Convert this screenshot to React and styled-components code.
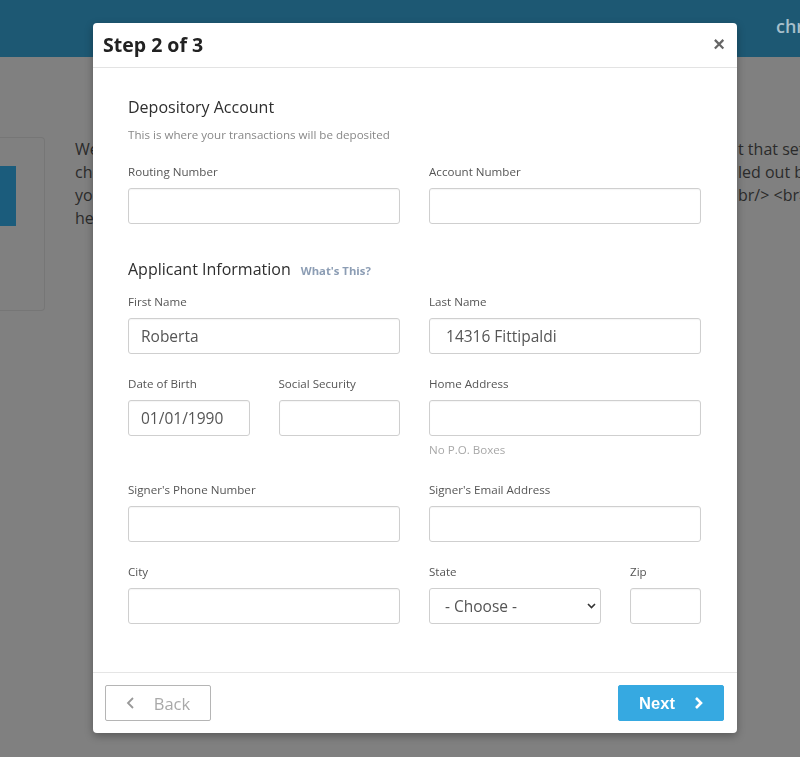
import React from 'react';
import styled, { createGlobalStyle } from 'styled-components';

const GlobalStyle = createGlobalStyle`
    html, body {
        margin: 0;
        padding: 0;
        height: 100%;
        overflow: hidden;
    }
    body {
        font-family: "Open Sans", "Liberation Sans", sans-serif;
        background: #808080;
    }
`;

const Page = styled.div`
    width: 100%;
    height: 757px;
    background: #808080;
    overflow: hidden;
`;

const TopBar = styled.div`
    height: 57px;
    background: #1d5873;
    display: flex;
    align-items: center;
    padding: 0 0 6px 776px;
    box-sizing: border-box;
    overflow: hidden;
`;

const Brand = styled.span`
    color: #a7bfcb;
    font-size: 18px;
    font-weight: 600;
    white-space: nowrap;
`;

const Content = styled.div`
    display: flex;
    align-items: flex-start;
    gap: 30px;
    padding-top: 80px;
`;

const SideCard = styled.div`
    flex-shrink: 0;
    width: 45px;
    height: 174px;
    border: 1px solid #767676;
    border-left: none;
    border-radius: 0 4px 4px 0;
    padding-top: 28px;
    box-sizing: border-box;
`;

const SideButton = styled.div`
    width: 16px;
    height: 60px;
    background: #1b5c7c;
`;

const Text = styled.div`
    padding-top: 1px;
    color: #2b2b2b;
    font-size: 16px;
    line-height: 23px;
`;

const Line = styled.div`
    display: grid;
    grid-template-columns: 663px auto;
    white-space: nowrap;
`;

const Backdrop = styled.div`
    position: fixed;
    inset: 0;
    padding: 23px 0 0 93px;
`;

const Modal = styled.div`
    width: 644px;
    background: #fff;
    border-radius: 4px;
    box-shadow: 0 3px 9px rgba(0, 0, 0, 0.3);
    overflow: hidden;
`;

const ModalHeader = styled.div`
    height: 45px;
    display: flex;
    align-items: center;
    justify-content: space-between;
    padding: 0 10px 2px;
    box-sizing: border-box;
    border-bottom: 1px solid #e3e3e3;
`;

const Title = styled.h2`
    margin: 0;
    font-size: 19.5px;
    font-weight: 700;
    color: #222;
`;

const Close = styled.button`
    border: none;
    background: none;
    padding: 0;
    margin-right: 2px;
    font-family: "Liberation Sans", Arial, sans-serif;
    font-size: 20px;
    font-weight: 700;
    color: #666;
    line-height: 1;
`;

const ModalBody = styled.div`
    padding: 28px 36px 26px 35px;
`;

const SectionTitle = styled.h3`
    margin: ${p => p.$gap || 0}px 0 0;
    font-size: 16px;
    font-weight: 500;
    line-height: 22px;
    color: #2e2e2e;
    display: flex;
    align-items: baseline;
`;

const WhatsThis = styled.a`
    margin-left: 10px;
    font-size: 11.3px;
    font-weight: 700;
    color: #8c9db4;
`;

const Subtitle = styled.p`
    margin: 9px 0 0;
    font-size: 11.6px;
    line-height: 16px;
    color: #888;
`;

const Grid = styled.div`
    display: grid;
    grid-template-columns: ${p => p.$cols || '1fr 1fr'};
    column-gap: 29px;
    align-items: start;
    margin-top: ${p => p.$top || 0}px;
`;

const Field = styled.div`
    margin-bottom: 22px;
`;

const Label = styled.label`
    display: block;
    font-size: 11.6px;
    line-height: 16px;
    color: #555;
    margin-bottom: 8px;
`;

const Input = styled.input`
    display: block;
    width: 100%;
    height: 36px;
    box-sizing: border-box;
    border: 1px solid #cfcfcf;
    border-radius: 3px;
    padding: 0 12px;
    font-family: "Open Sans", sans-serif;
    font-size: 15.5px;
    color: #555;
    box-shadow: inset 0 1px 1px rgba(0, 0, 0, 0.04);
    outline: none;
`;

const Select = styled.select`
    display: block;
    width: 100%;
    height: 36px;
    box-sizing: border-box;
    border: 1px solid #cfcfcf;
    border-radius: 3px;
    padding: 0 12px 0 15px;
    font-family: "Open Sans", sans-serif;
    font-size: 15.5px;
    color: #555;
    background: #fff url("data:image/svg+xml;utf8,<svg xmlns='http://www.w3.org/2000/svg' width='9' height='6' viewBox='0 0 9 6'><path d='M1 1l3.5 3.5L8 1' fill='none' stroke='%23333' stroke-width='1.6'/></svg>") no-repeat right 4px center;
    appearance: none;
    outline: none;
`;

const Help = styled.div`
    margin: 5px 0 1px;
    font-size: 11.6px;
    line-height: 18px;
    color: #a8a8a8;
`;

const ModalFooter = styled.div`
    display: flex;
    justify-content: space-between;
    padding: 12px 13px 12px 12px;
    border-top: 1px solid #e5e5e5;
`;

const Button = styled.button`
    width: 106px;
    height: 36px;
    box-sizing: border-box;
    border-radius: 2px;
    display: flex;
    align-items: center;
    justify-content: center;
    gap: 18px;
    padding: 0;
    border: 1px solid ${p => (p.$primary ? '#36a9e1' : '#b5b5b5')};
    background: ${p => (p.$primary ? '#36a9e1' : '#fff')};
    color: ${p => (p.$primary ? '#fff' : '#a9a9a9')};
    font-family: ${p => (p.$primary ? '"Liberation Sans", Arial, sans-serif' : '"Open Sans", sans-serif')};
    font-size: 16.5px;
    font-weight: ${p => (p.$primary ? 700 : 400)};
`;

const Chevron = ({ dir, color, width }) => (
    <svg width="10" height="14" viewBox="0 0 10 14">
        <path
            d={dir === 'left' ? 'M7 2L2 7l5 5' : 'M3 2l5 5-5 5'}
            fill="none"
            stroke={color}
            strokeWidth={width}
        />
    </svg>
);

const App = () => {
    return (
        <>
            <GlobalStyle />
            <Page>
                <TopBar>
                    <Brand>chr</Brand>
                </TopBar>
                <Content>
                    <SideCard>
                        <SideButton />
                    </SideCard>
                    <Text>
                        <Line><span>We will need some information about the business account</span><span>t that setup</span></Line>
                        <Line><span>check the information below, which may have been filled</span><span>led out by</span></Line>
                        <Line><span>your representative before continuing with this process.</span><span>br/&gt; &lt;br&gt;</span></Line>
                        <Line><span>help</span><span></span></Line>
                    </Text>
                </Content>

                <Backdrop>
                    <Modal>
                        <ModalHeader>
                            <Title>Step 2 of 3</Title>
                            <Close>×</Close>
                        </ModalHeader>
                        <ModalBody>
                            <SectionTitle>Depository Account</SectionTitle>
                            <Subtitle>This is where your transactions will be deposited</Subtitle>
                            <Grid $top={21}>
                                <Field>
                                    <Label>Routing Number</Label>
                                    <Input defaultValue="" />
                                </Field>
                                <Field>
                                    <Label>Account Number</Label>
                                    <Input defaultValue="" />
                                </Field>
                            </Grid>

                            <SectionTitle $gap={12}>
                                Applicant Information
                                <WhatsThis>What's This?</WhatsThis>
                            </SectionTitle>
                            <Grid $top={12}>
                                <Field>
                                    <Label>First Name</Label>
                                    <Input defaultValue="Roberta" />
                                </Field>
                                <Field>
                                    <Label>Last Name</Label>
                                    <Input defaultValue=" 14316 Fittipaldi" />
                                </Field>
                                <Grid>
                                    <Field>
                                        <Label>Date of Birth</Label>
                                        <Input defaultValue="01/01/1990" />
                                    </Field>
                                    <Field>
                                        <Label>Social Security</Label>
                                        <Input defaultValue="" />
                                    </Field>
                                </Grid>
                                <Field>
                                    <Label>Home Address</Label>
                                    <Input defaultValue="" />
                                    <Help>No P.O. Boxes</Help>
                                </Field>
                                <Field>
                                    <Label>Signer's Phone Number</Label>
                                    <Input defaultValue="" />
                                </Field>
                                <Field>
                                    <Label>Signer's Email Address</Label>
                                    <Input defaultValue="" />
                                </Field>
                                <Field>
                                    <Label>City</Label>
                                    <Input defaultValue="" />
                                </Field>
                                <Grid $cols="172px 1fr">
                                    <Field>
                                        <Label>State</Label>
                                        <Select defaultValue="">
                                            <option value="">- Choose -</option>
                                        </Select>
                                    </Field>
                                    <Field>
                                        <Label>Zip</Label>
                                        <Input defaultValue="" />
                                    </Field>
                                </Grid>
                            </Grid>
                        </ModalBody>
                        <ModalFooter>
                            <Button>
                                <Chevron dir="left" color="#999" width={1.8} />
                                Back
                            </Button>
                            <Button $primary>
                                Next
                                <Chevron dir="right" color="#fff" width={2.6} />
                            </Button>
                        </ModalFooter>
                    </Modal>
                </Backdrop>
            </Page>
        </>
    );
};

export default App;
